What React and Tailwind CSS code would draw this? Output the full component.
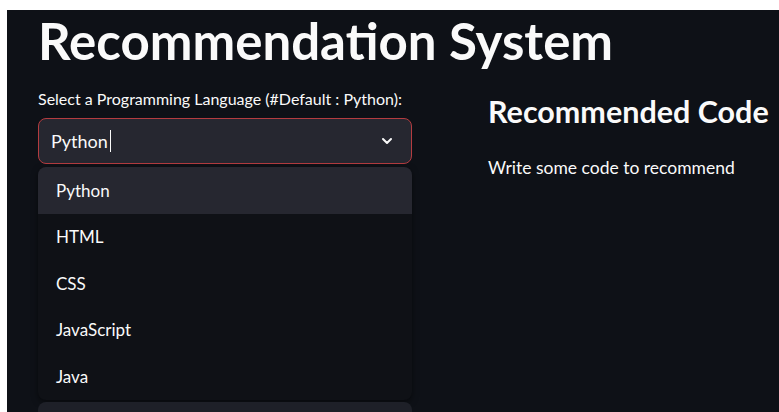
import { ChevronDown } from 'lucide-react'

const LANGS = ['Python', 'HTML', 'CSS', 'JavaScript', 'Java']

function LanguageSelect() {
  return (
    <div className="w-[374px] shrink-0">
      <p className="text-[16px] leading-5 text-[#fafafa]">Select a Programming Language (#Default : Python):</p>
      <div className="mt-[9px] flex h-[46px] items-center justify-between rounded-lg border border-[#b43c40] bg-[#262730] pl-3 pr-4">
        <span className="flex items-center text-[18px] text-[#fafafa]">
          Python
          <span className="ml-[2px] inline-block h-[22px] w-px bg-[#fafafa]" />
        </span>
        <ChevronDown size={16} strokeWidth={3} className="text-[#fafafa]" />
      </div>
      <ul className="mt-[3px] overflow-hidden rounded-lg bg-[#0f1116] shadow-[0_2px_6px_rgba(0,0,0,0.5)]">
        {LANGS.map((l, i) => (
          <li
            key={l}
            className={`flex h-[46.5px] items-center pl-[18px] text-[17px] text-[#fafafa] ${i === 0 ? 'bg-[#262730]' : ''}`}
          >
            {l}
          </li>
        ))}
      </ul>
      {/* next widget peeking out below the open menu */}
      <div className="mt-[2px] h-6 rounded-t-lg bg-[#1e2028]" />
    </div>
  )
}

export default function App() {
  return (
    <div className="h-[412px] w-[779px] overflow-hidden bg-white pl-[7px] pt-[10px]" style={{ fontFamily: 'Lato, "Noto Sans", sans-serif' }}>
      <div className="h-full bg-[#0e1117] pl-[31px]">
        <h1 className="pt-[1px] text-[51px] font-bold leading-[60px] text-[#fafafa]">Recommendation System</h1>
        <div className="mt-[18px] flex">
          <LanguageSelect />
          <div className="ml-[76px] shrink-0 pt-[4px]">
            <h2 className="whitespace-nowrap text-[30.5px] font-bold leading-9 text-[#fafafa]">Recommended Code</h2>
            <p className="mt-[26px] text-[17.5px] text-[#fafafa]">Write some code to recommend</p>
          </div>
        </div>
      </div>
    </div>
  )
}
